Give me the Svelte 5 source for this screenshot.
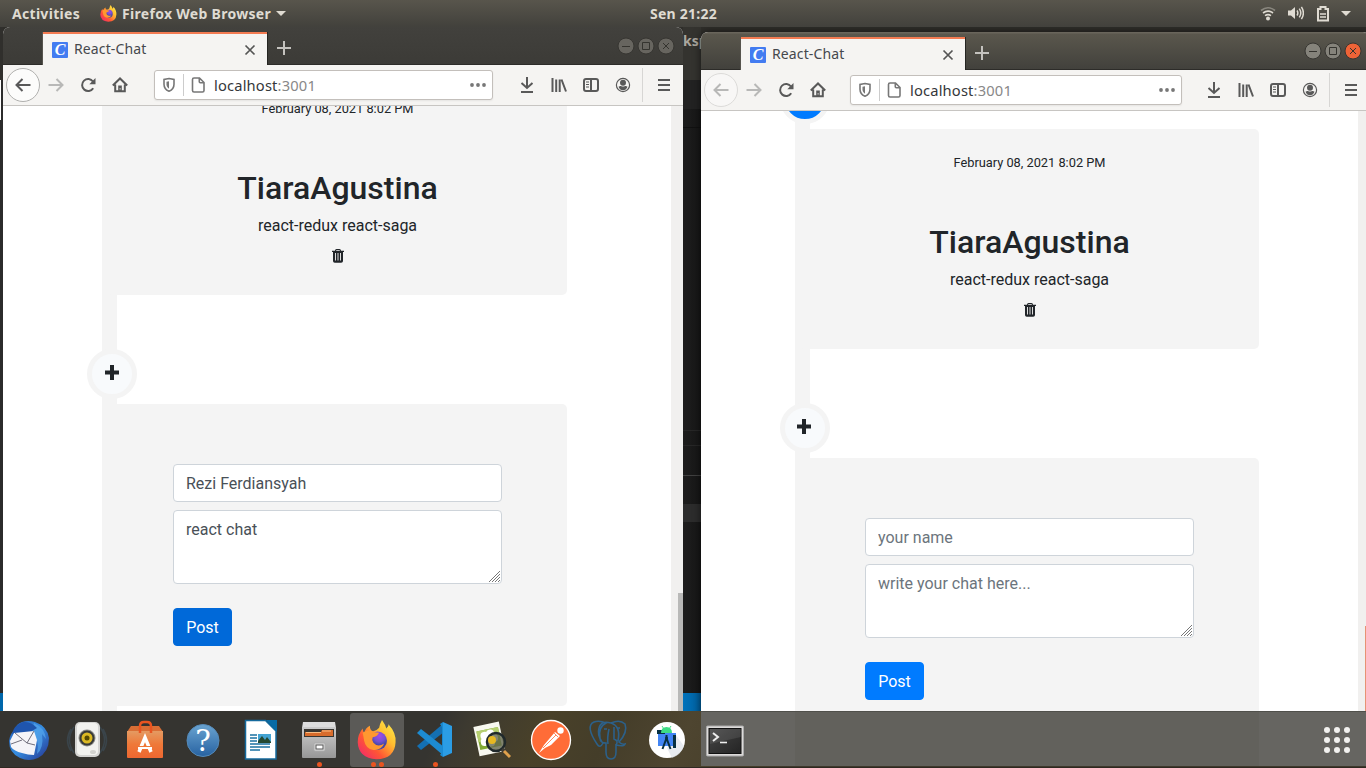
<script>
  const windows = [
    {
      id: 'left', active: false, x: 3, y: 27, w: 680, h: 684,
      url: 151, urlW: 339, margin: 99, scroll: -89, inset: 6,
      thumb: 487, name: 'Rezi Ferdiansyah', chat: 'react chat'
    },
    {
      id: 'right', active: true, x: 701, y: 32, w: 669, h: 733,
      url: 149, urlW: 332, margin: 94, scroll: -40, inset: 5,
      thumb: 515, name: '', chat: ''
    }
  ];
  const dots = [0, 1, 2, 3, 4, 5, 6, 7, 8];
</script>

<div class="desktop">
  <div class="editor">
    <span class="editor-title">ksp</span>
    <i class="tabs"></i><i class="crumbs"></i><i class="r0"></i><i class="r1"></i><i class="r2"></i><i class="r3"></i><i class="sel"></i><i class="status"></i>
  </div>
  <div class="edge"></div>

  {#each windows as win}
    <section
      class="window {win.id}"
      class:active={win.active}
      style="left:{win.x}px;top:{win.y}px;width:{win.w}px;height:{win.h}px"
    >
      <header class="titlebar">
        <div class="tab">
          <span class="favicon">C</span>
          <span class="tabname">React-Chat</span>
          <svg class="tabclose" width="12" height="12" viewBox="0 0 12 12"><path d="M1.5 1.5l9 9M10.5 1.5l-9 9" /></svg>
        </div>
        <svg class="newtab" width="14" height="14" viewBox="0 0 14 14"><path d="M7 0v14M0 7h14" /></svg>
        <div class="controls">
          <svg width="18" height="18" viewBox="0 0 18 18"><circle cx="9" cy="9" r="8" /><path d="M5 9.5h8" /></svg>
          <svg width="18" height="18" viewBox="0 0 18 18"><circle cx="9" cy="9" r="8" /><path d="M5.5 5.5h7v7h-7z" /></svg>
          <svg class="quit" width="18" height="18" viewBox="0 0 18 18"><circle cx="9" cy="9" r="8" /><path d="M6 6l6 6M12 6l-6 6" /></svg>
        </div>
      </header>

      <nav class="toolbar">
        <div class="navs" style="width:{win.url}px">
          <span class="back">
            <svg width="16" height="16" viewBox="0 0 16 16"><path d="M15.5 8H1.500M7.500 2l-6 6 6 6" /></svg>
          </span>
          <svg class="fwd" width="16" height="16" viewBox="0 0 16 16"><path d="M.5 8h14M8.500 2l6 6-6 6" /></svg>
          <svg class="reload" width="16" height="16" viewBox="0 0 16 16"><path d="M13.200 11.200A6 6 0 1 1 13 4.500" /><path class="solid" d="M15.500 1v6.200H9.300z" /></svg>
          <svg class="home" width="16" height="16" viewBox="0 0 16 16"><path d="M.8 8.500L8 1.500l7.200 7M3.200 7.500v6.800h9.600V7.500" /><path class="solid" d="M6.200 8.400h3.600v6H6.200z" /><path class="hole" d="M7.600 11.200h1v1.400h-1z" /></svg>
        </div>
        <div class="urlbar" style="width:{win.urlW}px">
          <svg width="14" height="16" viewBox="0 0 14 16"><path d="M7 1.500l5 1v4.700c0 3.200-2 5.800-5 7-3-1.200-5-3.800-5-7V2.500z" /><path class="solid" d="M7 4.200v7.500c-1.700-1.100-2.500-2.600-2.500-4.500V4.700z" /></svg>
          <i class="sep"></i>
          <svg class="doc" width="14" height="16" viewBox="0 0 14 16"><path d="M3 1h5.500L13 5.500V13.500q0 1.500-1.500 1.500h-8.500Q1.500 15 1.500 13.500V2.500Q1.500 1 3 1zM8.300 1v3.700q0 1 1 1H13" /></svg>
          <span class="address">localhost<span>:3001</span></span>
          <svg class="more" width="16" height="4" viewBox="0 0 16 4"><circle cx="2" cy="2" r="1.900" /><circle cx="8" cy="2" r="1.900" /><circle cx="14" cy="2" r="1.900" /></svg>
        </div>
        <div class="tools">
          <svg width="16" height="16" viewBox="0 0 16 16"><path d="M8 0v10.500M2.500 6L8 11l5.500-5M2 15h12" /></svg>
          <svg width="16" height="16" viewBox="0 0 16 16"><path d="M1.500 1v14M5.200 2.500V15M8.700 2.500V15M10.500 2.500L15 14.500" /></svg>
          <svg width="16" height="16" viewBox="0 0 16 16"><rect x="1" y="2" width="14" height="12" rx="2" /><path d="M8 2v12" /><path class="thin" d="M3 5h3M3 7.500h3M3 10h3" /></svg>
          <svg width="16" height="16" viewBox="0 0 16 16"><circle class="thin" cx="8" cy="8" r="6.600" /><circle class="solid" cx="8" cy="5.800" r="3" /><path class="solid" d="M3.500 9.700q1.500-1 2.500-.7 2 1 4 0 1.500-.2 2.500.7-1.400 3.500-4.500 3.500T3.500 9.700z" /></svg>
          <i class="line"></i>
          <svg class="menu" width="12" height="14" viewBox="0 0 12 14"><path d="M0 2h12M0 7h12M0 12h12" /></svg>
        </div>
      </nav>

      <main class="view">
        <div class="timeline" style="margin-left:{win.margin}px;margin-top:{win.scroll}px;--inset:{win.inset}px">
          <span class="badge blue"></span>
          <article class="card message">
            <small>February 08, 2021 8:02 PM</small>
            <h2>TiaraAgustina</h2>
            <p>react-redux react-saga</p>
            <svg class="trash" width="14" height="16" viewBox="0 0 14 16"><path d="M4 2.700Q4 1 5.500 1h3Q10 1 10 2.700h3v1.300H12V13q0 1.800-1.800 1.800H3.800Q2 14.800 2 13V4H1V2.700zM5 2.700h4Q9 2 8.200 2H5.800Q5 2 5 2.700z" /><path class="slits" d="M4.500 5v7.500M7 5v7.500M9.500 5v7.500" /></svg>
          </article>
          <span class="badge add"><svg width="14" height="15" viewBox="0 0 14 15"><path d="M7 0v15M0 7.500h14" /></svg></span>
          <form class="card entry">
            <input type="text" placeholder="your name" value={win.name} />
            <div class="area">
              <textarea placeholder="write your chat here..." value={win.chat}></textarea>
              <svg class="grip" width="11" height="11" viewBox="0 0 11 11"><path d="M0 11L11 0M3 11l8-8M6 11l5-5M9 11l2-2" /></svg>
            </div>
            <button type="button">Post</button>
          </form>
        </div>
        <div class="scroll"><i style="margin-top:{win.thumb}px"></i></div>
      </main>
    </section>
  {/each}

  <div class="panel">
    <span class="activities">Activities</span>
    <svg class="fx" width="17" height="17" viewBox="0 0 56 56"><use href="#fox" /></svg>
    <span class="appname">Firefox Web Browser</span>
    <i class="caret"></i>
    <span class="clock">Sen 21:22</span>
    <div class="status-icons">
      <svg width="16" height="16" viewBox="0 0 16 16"><g fill="none" stroke="#dfdbd2" stroke-width="1.600"><path opacity=".4" d="M1 4.500q7-5.500 14 0" /><path d="M3 7q5-3.800 10 0M5 9.600q3-2 6 0" /></g><circle cx="8" cy="12.500" r="2" fill="#dfdbd2" /></svg>
      <svg width="16" height="16" viewBox="0 0 16 16"><path fill="#dfdbd2" d="M0 4.500h3L7 1v12l-4-3.500H0z" /><path fill="none" stroke="#dfdbd2" stroke-width="1.500" d="M9 4.500q1.700 2.500 0 5M11.300 2.600q3 4.400 0 8.800M13.400 .8q4 6.200 0 12.400" /></svg>
      <svg width="14" height="16" viewBox="0 0 14 16"><path fill="none" stroke="#dfdbd2" stroke-width="2" d="M2 3h2.500V1h5v2H12V14.500H2z" /><path stroke="#dfdbd2" stroke-width="1.500" d="M4 8h6M4 11h6" /></svg>
      <i class="caret"></i>
    </div>
  </div>

  <footer class="dock">
    <div class="apps">
      <div class="app">
        <svg width="44" height="44" viewBox="0 0 44 44">
          <defs><linearGradient id="tb" x1="0" y1="0" x2="1" y2="1"><stop stop-color="#2359b5" /><stop offset=".5" stop-color="#368de0" /><stop offset="1" stop-color="#24318e" /></linearGradient></defs>
          <path fill="url(#tb)" d="M10 7Q17 1 28 4q12 4 14 16 0 14-11 20-9 4-18 0Q2 35 2 23 3 15 8 12z" />
          <path fill="#56a6ed" d="M27 5q11 5 12 16l-4-5q2 14-5 20 3-14-5-22z" opacity=".7" />
          <path fill="#1f55ad" d="M5 16q2-9 11-12 8-1 14 6l-7 4-12 1z" />
          <path fill="#f5f4f8" d="M3 23l4-8 20-2 3 9-3 15q-6 0-12-2Q7 33 4 29z" />
          <path fill="none" stroke="#706e7b" d="M8 15l12 10 7-12M4 26l11-4M20 25l8 2" />
        </svg>
      </div>
      <div class="app">
        <svg width="44" height="44" viewBox="0 0 44 44">
          <path fill="none" stroke="#41586a" stroke-width="1.500" d="M9 9q-9 13 0 26M6 11q-7 12 0 22M35 9q9 13 0 26M38 11q7 12 0 22" opacity=".45" />
          <rect x="10" y="4" width="25" height="35" rx="5" fill="#d4d4d2" /><rect x="12" y="5" width="21" height="32" rx="4" fill="#f2f2ef" />
          <circle cx="22" cy="20" r="8.500" fill="#8d8d88" /><circle cx="22" cy="20" r="7.500" fill="#383a38" /><circle cx="22" cy="20" r="5.500" fill="#dbb923" /><circle cx="22" cy="20" r="2.500" fill="#554900" /><ellipse cx="28" cy="34" rx="3" ry="2" fill="#d2d2ce" />
        </svg>
      </div>
      <div class="app">
        <svg width="44" height="44" viewBox="0 0 44 44">
          <defs><linearGradient id="bag" x2="0" y2="1"><stop stop-color="#e49a62" /><stop offset=".5" stop-color="#ef7838" /><stop offset="1" stop-color="#ee6731" /></linearGradient></defs>
          <path fill="#d96e35" d="M8 8h28l4 6H4z" /><path fill="url(#bag)" d="M4 13h36v26q0 1-1 1H5q-1 0-1-1z" />
          <path fill="none" stroke="#e95420" stroke-width="2.500" d="M17 15V8q0-4 4-4h3q4 0 4 4v7" />
          <path fill="none" stroke="#fff" stroke-width="3.500" d="M16 34l6-14.500L28 34" /><path stroke="#fff" stroke-width="2" d="M15 30h14" /><path stroke="#ef7635" stroke-width="1" d="M13 28.500h18" />
        </svg>
      </div>
      <div class="app">
        <svg width="44" height="44" viewBox="0 0 44 44">
          <defs><linearGradient id="help" x2="0" y2="1"><stop stop-color="#6aa4d1" /><stop offset="1" stop-color="#2762a1" /></linearGradient></defs>
          <circle cx="22" cy="22.500" r="16" fill="url(#help)" stroke="#558ab8" />
          <text x="22" y="33" text-anchor="middle" fill="#fff" font-family="DejaVu Serif" font-size="29">?</text>
        </svg>
      </div>
      <div class="app">
        <svg width="44" height="44" viewBox="0 0 44 44">
          <path fill="#fff" stroke="#156a9d" stroke-width="1.500" d="M6.500 2.500h20l10.500 10.500v28H6.500z" /><path fill="#086ba5" d="M27 2h11v12z" />
          <path stroke="#1b71a3" stroke-width="1.500" d="M11 17h7M11 20h7M11 23h7M11 26h20M11 29h20M11 32h10" /><rect x="19" y="16" width="13" height="9" fill="#43a3d2" /><path fill="#254831" d="M19 25v-2l4-5 3 4 2-3 4 5v1z" />
        </svg>
      </div>
      <div class="app">
        <svg width="44" height="44" viewBox="0 0 44 44">
          <defs><linearGradient id="cab" x2="0" y2="1"><stop stop-color="#ccc" /><stop offset="1" stop-color="#979797" /></linearGradient></defs>
          <path fill="#ddd" d="M6 4h32l1 6H5z" /><path fill="url(#cab)" d="M5 9h34v30q0 1-1 1H6q-1 0-1-1z" /><path fill="#393631" d="M7 11h30v8H7z" /><path fill="#d86c2c" d="M8 14h16l1-2h11v6H8z" /><path stroke="#f7bd83" d="M9 14.500h15M25 13h9" />
          <path fill="#b9b9b9" d="M6 19h32v2H6z" />
          <rect x="17" y="25" width="11" height="8" rx="1" fill="#ddd" stroke="#aaa" /><rect x="19" y="27" width="7" height="4" fill="#fff" stroke="#555" />
        </svg>
        <span class="pips"><i></i></span>
      </div>
      <div class="app current">
        <svg width="40" height="40" viewBox="0 0 56 56">
          <defs>
            <linearGradient id="flame" x1="1" y1="0" x2="0" y2="1"><stop stop-color="#fff44f" /><stop offset=".35" stop-color="#ffbd2f" /><stop offset=".65" stop-color="#ff5634" /><stop offset="1" stop-color="#ed1f79" /></linearGradient>
            <radialGradient id="globe" cx=".6" cy=".25"><stop stop-color="#a34ae9" /><stop offset=".6" stop-color="#7551d3" /><stop offset="1" stop-color="#4647a5" /></radialGradient>
            <g id="fox"><path fill="url(#flame)" d="M35 0q5 7 6 12 4-3 3-6 11 12 10 25-1 23-27 24Q2 53 1 31 1 20 8 12q0 4 2 6 2-7 8-10 0 6 4 8 6-1 9-5 1-6 4-11z" /><circle cx="29" cy="29" r="13" fill="url(#globe)" /><path fill="#ff9830" d="M8 18q9-6 17-1l6 1q-3 6-9 6-2 4 1 8 6 7 15 1-4 10-15 9-11-2-13-13-1-6-2-11z" /></g>
          </defs>
          <use href="#fox" />
        </svg>
        <span class="pips"><i></i><i></i></span>
      </div>
      <div class="app">
        <svg width="44" height="44" viewBox="0 0 44 44">
          <path fill="#1470b3" d="M4 28l4 4L31 14V5z" /><path fill="#1d8bd1" d="M4 15l4-4 23 18v9z" /><path fill="#2b9de5" d="M30 4l9 4v27l-9 4z" /><path fill="#198ad2" d="M30 4v35l-3-2 2-3V9l-2-3z" />
        </svg>
        <span class="pips"><i></i></span>
      </div>
      <div class="app">
        <svg width="44" height="44" viewBox="0 0 44 44">
          <g transform="rotate(-12 18 20)"><path fill="#f8f8ef" d="M5 6h26v30H5z" /><path fill="#83aa35" d="M7 11h22v19H7z" /><path fill="#b6cf70" d="M7 11h22v8L7 22z" /><g fill="#fff"><circle cx="14" cy="17" r="4" /><circle cx="20" cy="16" r="4" /><circle cx="23" cy="21" r="4" /><circle cx="19" cy="25" r="4" /><circle cx="13" cy="23" r="4" /></g></g>
          <circle cx="25" cy="24" r="9" fill="#63674f" fill-opacity=".8" stroke="#20292b" stroke-width="2.500" /><circle cx="21" cy="22" r="4" fill="#e6b822" /><path stroke="#403d35" stroke-width="4" d="M31 31l3 3" /><path stroke="#e0a14c" stroke-width="3" d="M33 33l6 6" />
        </svg>
      </div>
      <div class="app">
        <svg width="44" height="44" viewBox="0 0 44 44">
          <circle cx="22" cy="22" r="19.500" fill="#ff6c37" stroke="#fff" stroke-width="1.300" />
          <circle cx="31.500" cy="12.500" r="3.200" fill="#fff" /><path fill="#fff" d="M26 14l5 4-9 9-6 3-6 5 5-8z" /><path fill="none" stroke="#ff6c37" stroke-width=".8" d="M14 30l13-13M25 15l4 4" />
        </svg>
      </div>
      <div class="app">
        <svg width="44" height="44" viewBox="0 0 44 44">
          <g fill="none" stroke="#2c6089" stroke-width="1.600"><path d="M16 25q-3 6-6 1Q-2 8 7 4q5-2 12 1-8 4-6 15 0 5 6 5v9q0 7 5 7t5-7v-7q8 2 9-1-3 1-6-2 9-10 6-18-5-5-14-1-10-3-12 5-2 7 3 14M24 5q10 3 7 18M22 11q-2 9-1 15M27 9v12q5 2 2 6" /><path d="M30 10h3M17 11h3" /></g>
        </svg>
      </div>
      <div class="app">
        <svg width="44" height="44" viewBox="0 0 44 44">
          <circle cx="22" cy="22" r="18" fill="#fff" /><path fill="#d9dee6" d="M22 30l8-14 9 12q-3 9-12 12z" opacity=".6" /><path fill="#4285f4" d="M13 15h18v13H13z" /><path fill="#073042" d="M12 12h8v4h-8zM28 17h3v13h-3z" /><path fill="#3ddc84" d="M16 15q0-6 5.500-6t5.500 6z" /><path stroke="#3ddc84" d="M17 8l2 3M26 8l-2 3" /><path fill="none" stroke="#073042" stroke-width="2" d="M21.500 17v3l-4 11M21.500 20l4 11" /><circle cx="21.500" cy="20" r="1.500" fill="#073042" />
        </svg>
      </div>
      <div class="app">
        <svg width="44" height="44" viewBox="0 0 44 44">
          <defs><linearGradient id="term" x2="1" y2="1"><stop stop-color="#464646" /><stop offset="1" stop-color="#242424" /></linearGradient></defs>
          <rect x="3.500" y="8" width="37" height="30" rx="1" fill="#dcdad9" stroke="#aaa" /><rect x="6" y="10.500" width="32" height="25" fill="url(#term)" stroke="#111" />
          <path fill="#fff" fill-opacity=".09" d="M7 11h31v8L7 26z" /><path fill="none" stroke="#eee" stroke-width="2" d="M10 15l5 4-5 4" /><path stroke="#eee" stroke-width="1.600" d="M17 24.500h7" />
        </svg>
      </div>
    </div>
    <div class="launcher">{#each dots as _}<i></i>{/each}</div>
  </footer>
</div>

<style>
  :global(body) { margin: 0; overflow: hidden; }
  * { box-sizing: border-box; }
  .desktop { position: relative; width: 1366px; height: 768px; overflow: hidden; background: #2f2e2a; font-family: "Noto Sans", sans-serif; }
  svg { display: block; flex: none; }

  .panel { position: absolute; inset: 0 0 auto 0; height: 27px; display: flex; align-items: center; background: linear-gradient(#58554c, #42413c); color: #dfdbd2; font-size: 14px; font-weight: 700; line-height: 27px; white-space: nowrap; }
  .activities { width: 68px; margin-left: 12px; letter-spacing: .3px; }
  .fx { margin-left: 20px; }
  .appname { width: 150px; margin-left: 5px; letter-spacing: .3px; }
  .caret { width: 0; height: 0; border: 5px solid transparent; border-top-color: #dfdbd2; border-bottom: 0; margin-left: 4px; }
  .clock { margin-left: 364px; letter-spacing: .25px; }
  .status-icons { display: flex; align-items: center; gap: 12px; margin-left: auto; margin-right: 15px; }
  .status-icons .caret { margin: 0 0 0 -1px; }

  .editor { position: absolute; isolation: isolate; left: 683px; top: 27px; width: 18px; height: 684px; background: linear-gradient(90deg, #1d1d1d, #171717); }
  .editor i { position: absolute; left: 0; width: 18px; height: 1px; background: #272727; }
  .editor .tabs { top: 0; height: 53px; background: #34332f; }
  .editor .crumbs { top: 53px; height: 29px; background: #222; }
  .editor .r0 { top: 100px; background: #111; }
  .editor .r1 { top: 403px; }
  .editor .r2 { top: 418px; }
  .editor .r3 { top: 448px; background: #414141; }
  .editor .sel { top: 477px; height: 18px; background: #2c2c2c; }
  .editor .status { top: 666px; height: 18px; background: linear-gradient(90deg, #0072bb, #00609f); }
  .editor-title { position: relative; z-index: 1; display: block; line-height: 28px; font-size: 14px; font-weight: 700; color: #aaa69e; }
  .edge { position: absolute; left: 0; top: 27px; width: 3px; height: 684px; background: linear-gradient(#fff, #fff) 0 53px / 1px 40px no-repeat, linear-gradient(#302f2c 53px, #2b2b2b 53px, #2b2b2b 666px, #0067ab 666px); }

  .window { position: absolute; display: flex; flex-direction: column; background: #fff; border-radius: 7px 7px 0 0; overflow: hidden; }
  .active { box-shadow: 0 0 8px #0009; }
  .titlebar { height: 38px; flex: none; display: flex; align-items: center; background: linear-gradient(#42413d, #3c3b37); border-bottom: 1px solid #2d2c29; }
  .active .titlebar { background: linear-gradient(#69655b 1px, #5a574d 2px, #42413c); }
  .tab { align-self: flex-end; width: 224px; height: 33px; margin: 0 0 -1px 40px; padding: 1px 11px 0 9px; display: flex; align-items: center; background: #f5f4f2; border-top: 2px solid #f37b52; box-shadow: 1px 0 #252522, -1px 0 #56544e; position: relative; }
  .favicon { width: 16px; height: 16px; border-radius: 1px; background: #437cf1; color: #fff; font: italic 700 16px/16px "Liberation Serif", serif; text-align: center; }
  .tabname { margin: -2px 0 0 6px; font-size: 14px; line-height: 20px; letter-spacing: .12px; color: #45484d; }
  .tabclose { margin-left: auto; fill: none; stroke: #555; stroke-width: 1.700; }
  .newtab { margin-left: 10px; margin-top: 4px; fill: none; stroke: #c4c2be; stroke-width: 2; }
  .controls { display: flex; gap: 2px; margin-left: auto; margin-right: 8px; }
  .controls svg { fill: #67655f; stroke: #373632; }
  .controls path { fill: none; stroke: #35342f; }
  .active .controls svg { fill: #85837b; }
  .active .controls .quit { fill: #ee6337; }

  .toolbar { height: 41px; flex: none; display: flex; align-items: center; background: #f5f4f2; border-bottom: 1px solid #c7c5c2; }
  .toolbar svg { fill: none; stroke: #595959; stroke-width: 2; }
  .toolbar .solid { fill: #595959; stroke: none; }
  .toolbar .hole { fill: #f5f4f2; stroke: none; }
  .toolbar .thin { stroke-width: 1.200; }
  .navs { flex: none; display: flex; align-items: center; padding-left: 3px; }
  .back { width: 34px; height: 34px; display: grid; place-items: center; border: 1px solid #b0b0ae; border-radius: 50%; background: #fcfcfb; }
  .active .back { border-color: #dcdbd9; background: #f8f7f6; }
  .toolbar .fwd, .active .back svg { stroke: #b8b8b7; }
  .fwd { margin-left: 8px; }
  .reload, .home { margin-left: 16px; }
  .urlbar { flex: none; height: 30px; display: flex; align-items: center; border: 1px solid #c3bfbb; border-radius: 3px; background: #fff; padding: 0 6px 0 7px; box-shadow: 0 1px 2px #0001; }
  .urlbar svg { stroke: #777; stroke-width: 1.600; }
  .urlbar .solid { fill: #777; }
  .sep { width: 1px; height: 22px; margin: 0 7px; background: #ccc; }
  .address { margin-left: 9px; font-size: 14.700px; line-height: 22px; letter-spacing: .17px; color: #35373a; }
  .address span { color: #888; }
  .urlbar .more { margin-left: auto; fill: #777; stroke: none; }
  .tools { height: 34px; display: flex; align-items: center; gap: 16px; margin-left: auto; margin-right: 13px; }
  .line { width: 1px; height: 34px; margin: 0 -6px 0 -5px; background: #d7d6d4; }
  .tools .menu { margin-left: 5px; }

  .view { flex: 1; min-height: 0; position: relative; overflow: hidden; display: flex; align-items: flex-start; font-family: Roboto, sans-serif; font-size: 16px; line-height: 24px; color: #212529; }
  .timeline { flex: none; width: 465px; height: 1000px; background: linear-gradient(90deg, #f4f4f4 15px, transparent 15px); display: flex; flex-direction: column; }
  .badge { position: relative; flex: none; width: 50px; height: 50px; margin-left: -15px; border: 5px solid #f4f4f4; border-radius: 50%; background: #f8fafc; display: grid; place-items: center; }
  .blue { margin-top: 3px; margin-bottom: 5px; background: #007bff; }
  .add { margin-top: 54px; margin-bottom: 5px; }
  .add svg { stroke: #212529; stroke-width: 4; margin-top: -3px; }
  .active .add svg { margin-left: -2px; }
  .card { flex: none; width: 459px; margin-left: var(--inset); background: #f4f4f4; border-radius: 5px; }
  .message { height: 220px; padding-top: 22px; display: flex; flex-direction: column; align-items: center; }
  small { font-size: 12.800px; }
  h2 { margin: 48px 0 7px; font-size: 32px; line-height: 38px; font-weight: 500; }
  p { margin: 0; }
  .trash { margin: 10px 0 0; fill: #212529; }
  .slits { stroke: #ddd; stroke-width: 1; }
  .entry { height: 302px; padding: 60px 65px 0; }
  input, textarea, button { display: block; font: 400 16px/24px Roboto, sans-serif; border-radius: 4px; }
  input, textarea { width: 100%; height: 38px; margin: 0; padding: 6px 12px; border: 1px solid #ced4da; background: #fff; color: #495057; outline: 0; }
  ::placeholder { color: #6c757d; opacity: 1; }
  .area { position: relative; margin-top: 8px; }
  textarea { height: 74px; padding-top: 7px; resize: none; overflow: hidden; }
  .grip { position: absolute; right: 2px; bottom: 2px; stroke: #777; stroke-width: 1; }
  button { width: 59px; height: 38px; margin: 24px 0 0; padding: 7px 0 5px; border: 1px solid #0069d9; background: #0069d9; color: #fff; }
  .active button { border-color: #007bff; background: #007bff; }
  .scroll { width: 12px; height: 700px; margin-left: auto; background: #f1f0ef; }
  .scroll i { display: block; width: 5px; height: 300px; margin-left: 7px; background: #b9b9b8; }
  .active .scroll i { background: #e79273; }

  .dock { position: absolute; left: 0; top: 711px; width: 1366px; height: 57px; display: flex; align-items: flex-start; justify-content: space-between;
    background: linear-gradient(transparent 56px, #2f2821 56px), linear-gradient(115deg, #353430 0, #353430 405px, #3d3a30 430px, #494129 500px, #443d29 560px, #4e4530 630px, #463e29 700px, #3e392c 740px); }
  .dock::before { content: ""; position: absolute; left: 701px; top: 0; right: 0; height: 54px; background: linear-gradient(90deg, #666561 94px, #62615c 94px, #62615c 558px, #666561 558px); border-top: 1px solid #50504b; }
  .apps { position: relative; display: grid; grid-template-columns: repeat(13, 58px); }
  .app { position: relative; height: 54px; width: 54px; margin: 2px 2px 0; display: grid; place-items: center; border-radius: 3px; }
  .current { background: #5b5a57; }
  .pips { position: absolute; bottom: 0; left: 0; right: 0; display: flex; justify-content: center; gap: 3px; }
  .pips i { width: 5px; height: 5px; border-radius: 50%; background: #e95420; }
  .launcher { position: relative; display: grid; grid-template-columns: repeat(3, 6px); gap: 4px; margin: 16px 16px 0 0; }
  .launcher i { width: 6px; height: 6px; border-radius: 50%; background: #f2f1ef; }
</style>
